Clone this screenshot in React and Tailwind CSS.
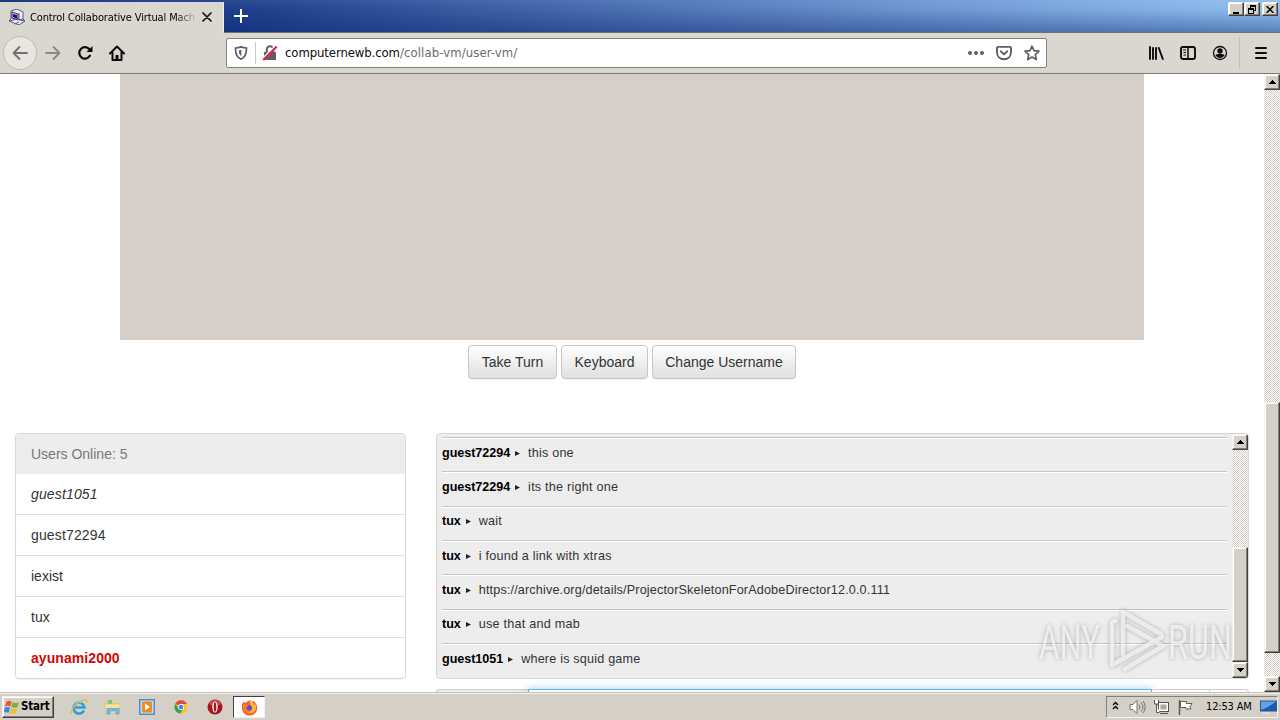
import React from "react";

const raised =
  "border border-t-[#f4f2ee] border-l-[#f4f2ee] border-r-[#404040] border-b-[#404040] shadow-[inset_-1px_-1px_0_#848078,inset_1px_1px_0_#fff]";
const dither =
  "bg-[repeating-conic-gradient(#ffffff_0_25%,#d4d0c8_0_50%)] bg-[length:2px_2px]";

function Arrow({ up }) {
  return (
    <svg width="7" height="4" viewBox="0 0 7 4" shapeRendering="crispEdges">
      <path d={up ? "M3 0h1v1h1v1h1v1h1v1H0V3h1V2h1V1h1z" : "M0 0h7v1H6v1H5v1H4v1H3V3H2V2H1V1H0z"} />
    </svg>
  );
}

function ScrollButton({ up }) {
  return (
    <div className={`flex h-4 w-4 shrink-0 items-center justify-center bg-[#d4d0c8] ${raised}`}>
      <Arrow up={up} />
    </div>
  );
}

function TitleBar() {
  return (
    <div className="flex h-[33px] shrink-0 bg-[linear-gradient(to_bottom,rgba(255,255,255,0.06),rgba(10,36,106,0.02)_30%,rgba(10,36,106,0.42)),linear-gradient(to_right,#0f2f7c_0,#1e3f8c_240px,#4468ac_560px,#7098d4_940px,#8fc0f0_1280px)]">
      <div className="mt-[2px] flex w-[224px] items-center border-r border-[#f0eeea] bg-[#dad6d0] pb-px pl-[9px]">
        <svg width="16" height="16" viewBox="0 0 16 16" className="shrink-0">
          <path d="M2 2l6-2 6 3v7l2 2-6 4L0 12l2-2z" fill="#eeeef6" stroke="#55557a" />
          <path d="M3 3l6 2v6L3 9z" fill="#cfcfe6" stroke="#333360" />
          <path d="M4 5l4 1v4L4 8z" fill="#151578" />
          <path d="M1 12l7-2 7 2M6 15l4-2M10 4v7l4-1" stroke="#50507c" fill="none" />
        </svg>
        <div className="ml-[5px] mt-[3px] w-[166px] whitespace-nowrap font-['DejaVu_Sans_Condensed','DejaVu_Sans',sans-serif] text-[11px] tracking-[-0.13px] text-black [font-stretch:condensed] [mask-image:linear-gradient(to_right,black_145px,transparent_168px)]">
          Control Collaborative Virtual Machi
        </div>
        <svg width="10" height="10" viewBox="0 0 10 10" className="ml-[6px]">
          <path d="M1 1l8 8M9 1L1 9" stroke="#111" strokeWidth="1.7" strokeLinecap="round" />
        </svg>
      </div>
      <div className="flex grow items-start justify-between border-b border-[#72706e]">
        <svg width="14" height="14" viewBox="0 0 14 14" className="ml-[10px] mt-[9px]">
          <path d="M7 0v14M0 7h14" stroke="#fff" strokeWidth="2" />
        </svg>
        <div className="mr-[2px] mt-[2px] flex">
          <div className={`flex h-[14px] w-4 justify-center bg-[#d4d0c8] ${raised}`}>
            <div className="mt-[9px] h-[2px] w-[6px] bg-black" />
          </div>
          <div className={`flex h-[14px] w-4 items-center justify-center bg-[#d4d0c8] ${raised}`}>
            <svg width="9" height="9" viewBox="0 0 9 9" shapeRendering="crispEdges">
              <path d="M2.5 3V.5h5v5H6M2 1.5h6M.5 8.5v-5h5v5zM0 4.500h6" fill="none" stroke="#000" />
            </svg>
          </div>
          <div className={`ml-[2px] flex h-[14px] w-4 items-center justify-center bg-[#d4d0c8] ${raised}`}>
            <svg width="8" height="7" viewBox="0 0 8 7">
              <path d="M.5 0l7 7M7.500 0l-7 7" stroke="#000" strokeWidth="1.500" />
            </svg>
          </div>
        </div>
      </div>
    </div>
  );
}

function NavBar() {
  return (
    <div className="flex h-[41px] shrink-0 items-center border-b border-[#7d7973] bg-[#dad6d0]">
      <div className="ml-[3px] flex h-[34px] w-[34px] items-center justify-center rounded-full border border-[#bebab4] bg-[#e9e6e1]">
        <svg width="16" height="16" viewBox="0 0 16 16" fill="none" stroke="#73716e" strokeWidth="1.900" strokeLinecap="round" strokeLinejoin="round">
          <path d="M15 8H1.500M7.500 2l-6 6 6 6" />
        </svg>
      </div>
      <svg width="16" height="16" viewBox="0 0 16 16" className="ml-[8px]" fill="none" stroke="#8c8a87" strokeWidth="1.900" strokeLinecap="round" strokeLinejoin="round">
        <path d="M1 8h13.500M8.500 2l6 6-6 6" />
      </svg>
      <svg width="16" height="16" viewBox="0 0 16 16" className="ml-[16px]">
        <path d="M13 10.600A5.700 5.700 0 1 1 12.400 4.300" fill="none" stroke="#0c0c0d" strokeWidth="2.200" strokeLinecap="round" />
        <path d="M15.500 1v6h-6z" fill="#0c0c0d" />
      </svg>
      <svg width="16" height="16" viewBox="0 0 16 16" className="ml-[16px]">
        <path d="M1 8.500l7-7 7 7M3.500 7v8h9V7" fill="none" stroke="#0c0c0d" strokeWidth="2" strokeLinecap="round" strokeLinejoin="round" />
        <path d="M6.500 15v-5h3v5z" fill="#0c0c0d" />
      </svg>
      <div className="ml-[101px] flex h-[30px] w-[821px] items-center rounded-[2px] border border-[#85817b] bg-white">
        <svg width="14" height="14" viewBox="0 0 14 14" className="ml-[7px]" fill="none" stroke="#5f5f61" strokeWidth="1.700">
          <path d="M7 .9c-2 .8-4 1.100-5.500 1.100C1.400 8 2.800 11.500 7 13.200 11.200 11.500 12.600 8 12.500 2 11 2 9 1.700 7 .9z" />
          <path d="M7.300 3.800v6.300C5.600 9 4.900 7 4.800 4.400z" fill="#5f5f61" stroke="none" />
        </svg>
        <div className="ml-[7px] h-[22px] w-px bg-[#c9c6c1]" />
        <svg width="16" height="16" viewBox="0 0 16 16" className="ml-[6px]">
          <path d="M4.800 7V4.500a3.200 3.200 0 0 1 6.400 0V7" fill="none" stroke="#5f5f61" strokeWidth="2" />
          <path d="M2 7h12v8H2z" fill="#5f5f61" />
          <path d="M0 14L13 1" stroke="#fff" strokeWidth="1.500" />
          <path d="M1.200 15L14.800 1.500" stroke="#e22850" strokeWidth="2.200" />
        </svg>
        <div className="ml-[7px] grow whitespace-nowrap font-['DejaVu_Sans_Condensed','DejaVu_Sans',sans-serif] text-[13px] text-[#6c6c6e] [font-stretch:condensed]">
          <span className="tracking-[-0.1px] text-[#0c0c0d]">computernewb.com</span>
          <span className="tracking-[0.1px]">/collab-vm/user-vm/</span>
        </div>
        <svg width="16" height="16" viewBox="0 0 16 16" fill="#5f5f61">
          <circle cx="2" cy="8" r="2" />
          <circle cx="8" cy="8" r="2" />
          <circle cx="14" cy="8" r="2" />
        </svg>
        <svg width="16" height="16" viewBox="0 0 16 16" className="ml-[12px]" fill="none" stroke="#5f5f61" strokeWidth="1.900" strokeLinecap="round" strokeLinejoin="round">
          <path d="M2 1.900h12c.6 0 1 .4 1 1V7c0 4.500-3 7.200-7 7.200S1 11.500 1 7V2.900c0-.6.400-1 1-1z" />
          <path d="M4.700 6.300L8 9.400l3.300-3.100" />
        </svg>
        <svg width="16" height="16" viewBox="0 0 16 16" className="ml-[12px] mr-[6px]" fill="none" stroke="#5f5f61" strokeWidth="1.700" strokeLinejoin="round">
          <path d="M8 1.200l2 4.500 5 .5-3.700 3.400 1 4.900L8 12l-4.300 2.500 1-4.900L1 6.200l5-.5z" />
        </svg>
      </div>
      <svg width="16" height="16" viewBox="0 0 16 16" className="ml-[101px]" stroke="#0c0c0d" strokeWidth="1.900" strokeLinecap="round">
        <path d="M2 2v12M5 3v11M8 3v11M10.800 3l4 11" />
      </svg>
      <svg width="16" height="16" viewBox="0 0 16 16" className="ml-[16px]" fill="none" stroke="#0c0c0d">
        <rect x="1" y="2" width="14" height="12" rx="2" strokeWidth="1.900" />
        <path d="M8 2v12" strokeWidth="1.500" />
        <path d="M3 5h3M3.500 7.500H6M3.500 10H6" strokeWidth="1" />
      </svg>
      <svg width="16" height="16" viewBox="0 0 16 16" className="ml-[16px]">
        <circle cx="8" cy="8" r="6.500" fill="none" stroke="#0c0c0d" strokeWidth="1.300" />
        <circle cx="8" cy="6" r="2.700" fill="#0c0c0d" />
        <path d="M3.400 10C5 8.700 11 8.700 12.600 10 11.500 12 10 13 8 13s-3.500-1-4.600-3z" fill="#0c0c0d" />
      </svg>
      <div className="ml-[11px] h-[32px] w-px bg-[#c5c1bb]" />
      <svg width="12" height="12" viewBox="0 0 12 12" className="ml-[15px]" stroke="#0c0c0d" strokeWidth="2" strokeLinecap="round">
        <path d="M1 1h10M1 6h10M1 11h10" />
      </svg>
    </div>
  );
}

function PageButton({ children, className }) {
  return (
    <div className={`flex h-[34px] items-center justify-center whitespace-nowrap rounded-[4px] border border-[#c6c6c6] bg-linear-to-b from-white to-[#e0e0e0] text-sm text-[#333] shadow-[0_1px_1px_rgba(0,0,0,0.06)] ${className}`}>
      {children}
    </div>
  );
}

const users = [
  ["guest1051", "italic tracking-[0.15px]"],
  ["guest72294", "tracking-[0.15px]"],
  ["iexist", ""],
  ["tux", ""],
  ["ayunami2000", "pb-px font-bold tracking-[0.07px] text-[#d00808]"],
];

const messages = [
  ["guest72294", "this one", "tracking-[0.2px]"],
  ["guest72294", "its the right one", "tracking-[0.23px]"],
  ["tux", "wait", "tracking-[0.2px]"],
  ["tux", "i found a link with xtras", "tracking-[0.22px]"],
  ["tux", "https://archive.org/details/ProjectorSkeletonForAdobeDirector12.0.0.111", "tracking-[0.16px]"],
  ["tux", "use that and mab", "tracking-[0.24px]"],
  ["guest1051", "where is squid game", "tracking-[0.2px]"],
];

function UserList() {
  return (
    <div className="h-[246px] w-[391px] shrink-0 overflow-hidden rounded-[4px] border border-[#d9d9d9] bg-white text-sm text-[#333] shadow-[0_1px_1px_rgba(0,0,0,0.05)]">
      <div className="flex h-[40px] items-center bg-[#ededed] pl-[15px] text-[#777]">Users Online: 5</div>
      {users.map(([name, cls], i) => (
        <div key={name} className={`flex h-[41px] items-center pl-[15px] ${i < 4 ? "border-b border-[#ddd]" : ""} ${cls}`}>
          {name}
        </div>
      ))}
    </div>
  );
}

function ChatBox() {
  return (
    <div className="flex h-[246px] w-[813px] overflow-hidden rounded-[4px] border border-[#d6d6d6] bg-[#ededed]">
      <div className="ml-[5px] mt-[3px] w-[785px]">
        {messages.map(([name, text, spacing], i) => (
          <div key={i} className="flex h-[34.333px] items-center whitespace-nowrap border-t border-[#c6c6c6] pb-[3px] text-[12.6px] text-[#333] shadow-[inset_0_1px_0_#fff]">
            <span className="font-bold tracking-[-0.05px] text-black">{name}</span>
            <svg width="5" height="5" viewBox="0 0 5 5" className="ml-[5px] mr-[8px]">
              <path d="M0 0l5 2.500L0 5z" fill="#222" />
            </svg>
            <span className={spacing}>{text}</span>
          </div>
        ))}
      </div>
      <div className={`ml-[5px] flex w-4 shrink-0 flex-col ${dither}`}>
        <ScrollButton up />
        <div className="h-[97px] shrink-0" />
        <div className={`grow bg-[#d4d0c8] ${raised}`} />
        <ScrollButton />
      </div>
    </div>
  );
}

function Watermark() {
  return (
    <svg width="204" height="76" viewBox="0 0 204 76" className="absolute left-[1036px] top-[531px] overflow-visible drop-shadow-[0_0_2px_rgba(0,0,0,0.35)]">
      <g fill="#f8f8f8" fillOpacity="0.75" fontFamily="Roboto, sans-serif" fontSize="49">
        <text x="3" y="54" textLength="61" lengthAdjust="spacingAndGlyphs">ANY</text>
        <text x="132" y="54" textLength="64" lengthAdjust="spacingAndGlyphs">RUN</text>
      </g>
      <path
        d="M87 50V7l38 22M79 16q-3 0-3 4v40l50-28M89 64l38-23-36-20"
        fill="none"
        stroke="#f8f8f8"
        strokeOpacity="0.75"
        strokeWidth="4.500"
        strokeLinecap="round"
        strokeLinejoin="round"
      />
    </svg>
  );
}

function Page() {
  return (
    <div className="relative flex h-[618px] shrink-0 overflow-hidden bg-white">
      <div className="flex w-[1264px] shrink-0 flex-col">
        <div className="ml-[120px] h-[266px] w-[1024px] shrink-0 bg-[#d5cec9]" />
        <div className="mt-[5px] flex shrink-0 justify-center gap-1">
          <PageButton className="w-[89px]">Take Turn</PageButton>
          <PageButton className="w-[87px]">Keyboard</PageButton>
          <PageButton className="w-[144px]">Change Username</PageButton>
        </div>
        <div className="mt-[54px] flex shrink-0 gap-[30px] pl-[15px]">
          <UserList />
          <div>
            <ChatBox />
            <div className="mt-[10px] flex h-[34px] w-[813px]">
              <div className="w-[92px] rounded-tl-[4px] border border-r-0 border-[#ccc] bg-[#ededed]" />
              <div className="w-[624px] border border-[#66afe9] bg-white shadow-[0_0_8px_rgba(102,175,233,0.6)]" />
              <div className="w-[58px] border-t border-r border-[#ccc] bg-white" />
              <div className="grow rounded-tr-[4px] border-r border-t border-[#ccc] bg-white" />
            </div>
          </div>
        </div>
      </div>
      <div className={`flex w-4 flex-col ${dither}`}>
        <ScrollButton up />
        <div className="h-[312px] shrink-0" />
        <div className={`h-[251px] shrink-0 bg-[#d4d0c8] ${raised}`} />
        <div className="grow" />
        <ScrollButton />
      </div>
      <Watermark />
    </div>
  );
}

function Taskbar() {
  return (
    <div className="flex h-[28px] shrink-0 items-center border-t border-[#c4c0b8] bg-[#d4d0c8] font-['DejaVu_Sans_Condensed','DejaVu_Sans',sans-serif] text-[11px] text-black shadow-[inset_0_1px_0_#f4f2ee] [font-stretch:condensed]">
      <div className={`ml-[2px] mt-px flex h-[22px] w-[52px] items-center gap-px pl-px font-bold ${raised}`}>
        <svg width="16" height="15" viewBox="0 0 16 15">
          <path d="M2.500 1.500C4.500.4 6 .7 7.700 1.600L6.300 6.600C4.500 5.700 3 5.600 1 6.500z" fill="#e9592a" />
          <path d="M8.700 2c2 1 4 1.300 6.300.2L13.600 7c-2 1-4.200.8-6.200-.2z" fill="#7bb13b" />
          <path d="M.8 7.700c2-1 3.600-.9 5.300 0L4.700 12.800C3 12 1.500 11.900-.4 12.700z" fill="#3b8ad8" />
          <path d="M7.200 8.100c2 1 4 1.200 6.100.2L12 13c-2 1-4.200.9-6.200-.1z" fill="#f6bd2c" />
        </svg>
        <span className="text-[11.500px] tracking-[-0.2px]">Start</span>
      </div>
      <svg width="18" height="18" viewBox="0 0 18 18" className="ml-[16px] mt-px" fill="none">
        <path d="M14 12.500A5.500 5.500 0 1 1 14.500 9.500H5" stroke="#2f9bdd" strokeWidth="2.600" />
        <path d="M4 9a5 5 0 0 1 8-4" stroke="#8ad4f6" strokeWidth="1" />
        <path d="M1.500 16C-1 12 11 1 16 2c1.500.4 1 2 .3 3" stroke="#e6b93a" strokeWidth="1.300" />
      </svg>
      <svg width="18" height="16" viewBox="0 0 18 16" className="ml-[16px] mt-px">
        <path d="M2 2h6l1.500 2H15v9H2z" fill="#e8ce73" />
        <path d="M4 1h4v4H4z" fill="#7fc37b" />
        <path d="M1 5h15l-1 9H2z" fill="#f7e6a0" stroke="#d8bd60" strokeWidth=".6" />
        <path d="M3 15V9.500h12V15h-3v-3H6v3z" fill="#79bce6" stroke="#4b96c8" strokeWidth=".6" />
      </svg>
      <svg width="16" height="16" viewBox="0 0 16 16" className="ml-[17px] mt-px">
        <rect x=".7" y=".7" width="14.600" height="14.600" fill="#b8dcf5" stroke="#4d8cc4" strokeWidth="1.400" />
        <rect x="3" y="2.500" width="10" height="11" rx="1.500" fill="#f18a1c" />
        <path d="M6 4.500l5 3.500-5 3.500z" fill="#fff" />
      </svg>
      <svg width="14" height="14" viewBox="0 0 16 16" className="ml-[19px] mt-px">
        <circle cx="8" cy="8" r="7.500" fill="#f6c62c" />
        <path d="M8 8L1.500 4.200A7.500 7.500 0 0 1 14.800 4.600H8z" fill="#dd4a3b" />
        <path d="M8 8l-3 1.500-3.500-5.300A7.500 7.500 0 0 0 7.300 15.500l3.300-5.700z" fill="#35a352" />
        <circle cx="8" cy="8" r="3.500" fill="#fff" />
        <circle cx="8" cy="8" r="2.700" fill="#4385ec" />
      </svg>
      <svg width="16" height="16" viewBox="0 0 16 16" className="ml-[19px] mt-px">
        <circle cx="8" cy="8" r="7.500" fill="#a5151c" />
        <path d="M2 5a6.500 6.500 0 0 1 12 0c-3 2-9 2-12 0z" fill="#d0484b" />
        <ellipse cx="8" cy="8" rx="2.700" ry="5.500" fill="#fff" />
        <ellipse cx="8" cy="8" rx="1.300" ry="4.800" fill="#a5151c" />
      </svg>
      <div className="ml-[10px] mt-px flex h-[22px] w-[32px] items-center justify-center border border-b-[#f4f2ee] border-l-[#404040] border-r-[#f4f2ee] border-t-[#404040] bg-white">
        <svg width="17" height="17" viewBox="0 0 17 17">
          <path d="M1 5.500l1.500-3L4 4l5-3 1.500 2 2-1c2.500 2 4 4.500 3.700 8A7.700 7.700 0 0 1 1 10z" fill="#f65938" />
          <path d="M9 1c3 1.500 4 3.500 4 5.500l1-2c2 3 1.500 6-1 8.500-3 2.500-7 1.500-9-1 4 1 7-1 6-4.500C9.500 5 8 4 9 1z" fill="#fdbb2d" />
          <circle cx="8" cy="9" r="3" fill="#6848c7" />
          <path d="M2 5c2-.6 4-.2 6 1.500L5.500 8C5 11 8 12 11 11 8 14.500 3 14 2 10z" fill="#f9792d" />
        </svg>
      </div>
      <div className="grow" />
      <div className="mr-[2px] mt-px flex h-[22px] w-[172px] items-center border border-b-[#f4f2ee] border-l-[#848078] border-r-[#f4f2ee] border-t-[#848078]">
        <svg width="7" height="9" viewBox="0 0 7 9" className="ml-[5px] -mt-1" fill="none" stroke="#000" strokeWidth="1.300">
          <path d="M1 4l2.500-2.500L6 4M1 8l2.500-2.500L6 8" />
        </svg>
        <svg width="17" height="16" viewBox="0 0 17 16" className="ml-[10px]" fill="none" stroke="#74716d">
          <path d="M1 5.500h3l4-4v13l-4-4H1z" fill="#fff" />
          <path d="M10 5.500q2 2.500 0 5M12 3.500q4 4.500 0 9M14 2q4.500 6 0 12" />
        </svg>
        <svg width="17" height="16" viewBox="0 0 17 16" className="ml-[7px]" fill="#fff" stroke="#55524e">
          <rect x="5.500" y="3.500" width="10" height="9" />
          <rect x="7.500" y="5.500" width="6" height="5" fill="#a9a6a2" stroke="none" />
          <path d="M1.500 1v4h4V1M3.500 5v8.500h3M7 14.500h8" />
        </svg>
        <svg width="17" height="16" viewBox="0 0 17 16" className="ml-[7px]">
          <path d="M2.500 1v15" stroke="#605d59" strokeWidth="1.500" />
          <path d="M3.500 2.500h6v2h5.500l-2 3 1 2.500H9V8.500H3.500z" fill="#fff" stroke="#605d59" />
        </svg>
        <span className="ml-[12px] w-[50px] whitespace-nowrap tracking-[-0.15px]">12:53 AM</span>
        <svg width="17" height="14" viewBox="0 0 17 14" className="ml-[4px]">
          <rect x=".5" y="1" width="16" height="10" fill="#1d5ab4" stroke="#31557e" />
          <path d="M1 1.500h15L8 7 1 10z" fill="#5da3ea" />
          <path d="M2 13h8" stroke="#e6e6e6" />
        </svg>
      </div>
    </div>
  );
}

export default function App() {
  return (
    <div className="flex h-[720px] w-[1280px] flex-col overflow-hidden font-['Liberation_Sans',Arial,sans-serif]">
      <TitleBar />
      <NavBar />
      <Page />
      <Taskbar />
    </div>
  );
}
